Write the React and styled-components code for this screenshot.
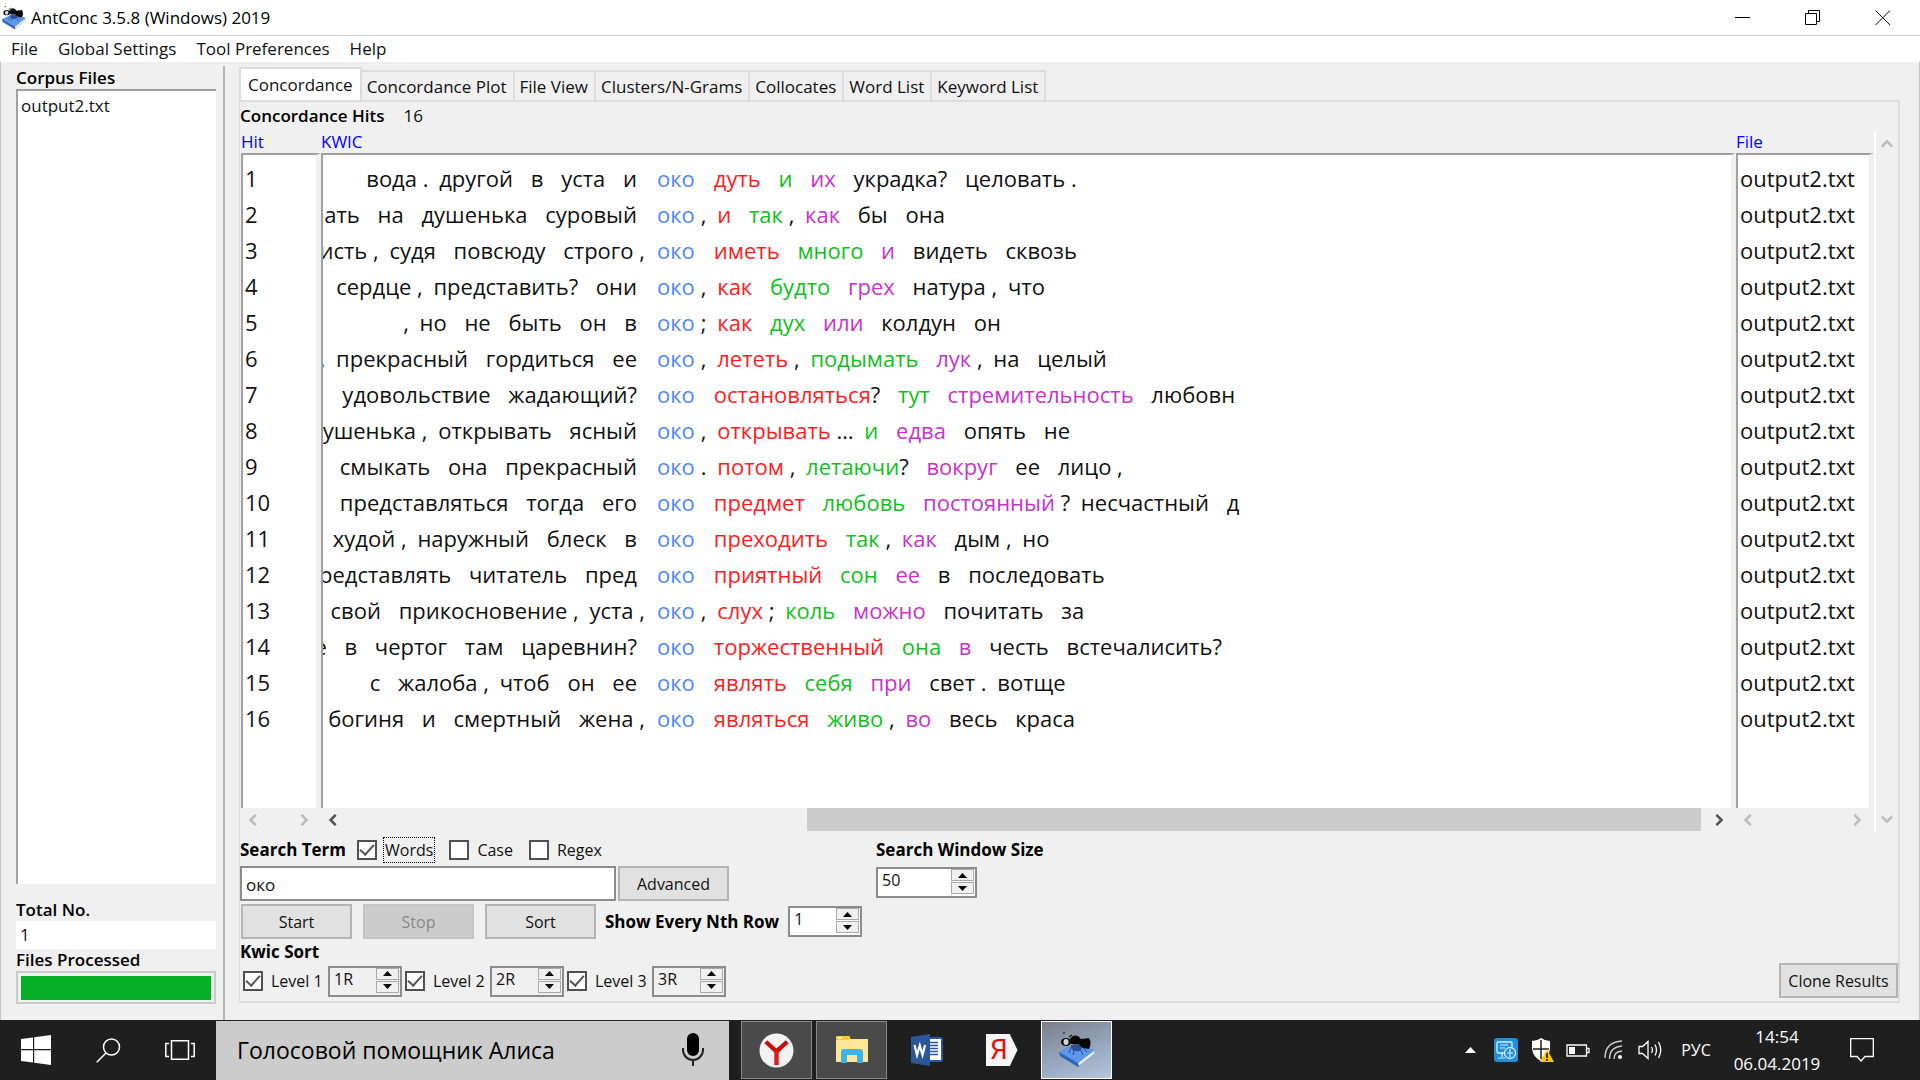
import React, { useState } from "react";
import styled, { createGlobalStyle, css } from "styled-components";

const FACE = "#f0f0f0";
const EDGE = "#dcdcdc";
const SUNKEN = "#a0a0a0";

const GlobalStyle = createGlobalStyle`
  * { box-sizing: border-box; }
  html, body { margin: 0; height: 100%; }
  body {
    background: ${FACE};
    color: #111;
    font: 17px/24px "Open Sans", "Noto Sans", sans-serif;
    overflow: hidden;
  }
  button, input { font: inherit; color: inherit; margin: 0; }
  button { padding: 0; border: 0; background: none; }
`;

const Screen = styled.div`
  display: flex;
  flex-direction: column;
  height: 100vh;
`;

/* ---------- window frame ---------- */

const TitleBar = styled.header`
  display: flex;
  align-items: center;
  flex: none;
  height: 36px;
  padding: 0 2px;
  background: #fff;
  border-bottom: 1px solid #ccc;
  color: #000;
`;

const WindowTitle = styled.h1`
  flex: 1;
  margin: 0;
  padding-left: 5px;
  font-size: 17px;
  font-weight: 400;
`;

const WindowButton = styled.button`
  display: grid;
  place-items: center;
  width: 70px;
  height: 34px;
`;

const MenuBar = styled.nav`
  display: flex;
  flex: none;
  gap: 20px;
  height: 26px;
  padding: 0 11px;
  background: #fff;
`;

const MenuItem = styled.button`
  height: 26px;
  font-size: 17px;
  line-height: 26px;
`;

const Workspace = styled.main`
  display: flex;
  flex: 1;
  min-height: 0;
  border: solid #c4c4c4;
  border-width: 0 1px;
`;

/* ---------- corpus sidebar ---------- */

const Sidebar = styled.aside`
  display: flex;
  flex-direction: column;
  width: 224px;
  margin-top: 4px;
  padding: 1px 7px 16px 15px;
  border-right: 2px solid #b4b4b4;
`;

const Caption = styled.span`
  font-size: 17px;
  font-weight: ${(p) => (p.$strong ? 700 : 600)};
  line-height: ${(p) => p.$line || 22}px;
  color: #000;
  white-space: nowrap;
`;

const FileList = styled.ul`
  flex: 1;
  margin: 0 0 15px;
  padding: 1px 3px;
  list-style: none;
  background: #fff;
  border: solid ${SUNKEN};
  border-width: 2px 0 0 2px;
  line-height: 28px;
`;

const CountBox = styled.output`
  padding: 0 4px;
  line-height: 28px;
  background: #fff;
`;

const ProgressFrame = styled.div`
  height: 33px;
  padding: 3px;
  border: 2px solid #cacaca;
`;

const ProgressFill = styled.div`
  width: 100%;
  height: 24px;
  background: #06b025;
`;

/* ---------- notebook ---------- */

const Notebook = styled.section`
  display: flex;
  flex: 1;
  flex-direction: column;
  min-width: 0;
  padding: 5px 19px 17px 14px;
`;

const TabStrip = styled.div`
  display: flex;
  align-items: flex-end;
  height: 33px;
`;

const Tab = styled.button`
  height: 30px;
  padding: 1px 6px 0 5px;
  border: solid ${EDGE};
  border-width: 2px 2px 0 0;
  font-size: 17px;
  line-height: 27px;
  white-space: nowrap;
  ${(p) =>
    p["aria-selected"] &&
    css`
      align-self: stretch;
      height: auto;
      padding: 0 7px;
      border-width: 2px;
      border-bottom: 0;
      background: #fff;
    `}
`;

const Pane = styled.div`
  display: flex;
  flex: 1;
  flex-direction: column;
  min-height: 0;
  border: 2px solid ${EDGE};
  border-left-width: 1px;
`;

const HitsLine = styled.div`
  display: flex;
  gap: 19px;
  line-height: 28px;
  height: 29px;
`;

const Results = styled.div`
  display: flex;
  flex: 1;
  min-height: 0;
  padding-left: 1px;
`;

const ResultTable = styled.table`
  flex: 1;
  width: 100%;
  height: 100%;
  table-layout: fixed;
  border-spacing: 0;
`;

const Col = styled.col`
  width: ${(p) => p.$width};
`;

const Head = styled.th`
  height: 22px;
  padding: 0;
  color: #0000ff;
  font-size: 17px;
  font-weight: 400;
  line-height: 22px;
  text-align: left;
`;

const Cell = styled.td`
  height: 36px;
  padding: 0 0 0 2px;
  overflow: hidden;
  background: #fff;
  border: solid ${SUNKEN};
  border-width: 0 5px 0 2px;
  border-right-color: ${FACE};
  font-size: 22px;
  line-height: 36px;
  white-space: nowrap;
`;

const KwicCell = styled(Cell)`
  padding: 0;
`;

const Row = styled.tr``;

const Body = styled.tbody`
  ${Row}:first-child ${Cell} {
    height: 7px;
    border-top: 2px solid ${SUNKEN};
    line-height: 0;
  }
  ${Row}:last-child ${Cell} { height: auto; }
`;

const BarCell = styled.td`
  height: 26px;
  padding: 0 5px 0 0;
  vertical-align: top;
`;

const HScroll = styled.div`
  display: flex;
  align-items: center;
  height: 23px;
  padding: 0 5px 0 6px;
  color: ${(p) => (p.$active ? "#555" : "#bdbdbd")};
`;

const Track = styled.div`
  display: flex;
  flex: 1;
  justify-content: flex-end;
  height: 23px;
  padding: 0 11px 0 0;
`;

const Thumb = styled.div`
  width: 65.7%;
  background: #cdcdcd;
`;

const ArrowButton = styled.button`
  display: grid;
  place-items: center;
  width: 14px;
  height: 20px;
`;

const VScroll = styled.div`
  display: flex;
  flex-direction: column;
  align-items: center;
  justify-content: space-between;
  width: 24px;
  margin-bottom: 2px;
  padding: 3px 0;
  border-left: 2px solid #fff;
  color: #bdbdbd;
`;

const KwicLine = styled.div`
  display: grid;
  grid-template-columns: 314px auto 1fr;
  column-gap: 20px;
  line-height: 36px;
`;

const LeftContext = styled.span`
  display: flex;
  justify-content: flex-end;
  overflow: hidden;
  white-space: pre;
  margin-right: ${(p) => (p.$punct ? "-8px" : "0")};
`;

const RightContext = styled.span`
  white-space: pre;
  margin-left: ${(p) => (p.$punct ? "-14px" : "-1px")};
`;

const Node = styled.span`
  color: #4f86ff;
`;

const Token = styled.span`
  margin-left: ${(p) => p.$gap}px;
`;

const Tint = styled.span`
  color: ${(p) => p.$color || "inherit"};
`;

/* ---------- search controls ---------- */

const Controls = styled.form`
  display: flex;
  flex: none;
  padding-bottom: 3px;
`;

const SearchColumn = styled.div`
  display: flex;
  flex-direction: column;
  width: 636px;
  padding-bottom: 1px;
`;

const ControlRow = styled.div`
  display: flex;
  align-items: center;
  height: ${(p) => p.$height}px;
  gap: ${(p) => p.$gap || 0}px;
`;

const Options = styled.div`
  display: flex;
  gap: 14px;
`;

const ButtonRow = styled.div`
  display: flex;
  align-items: center;
  gap: 9px;
  margin: 3px 0 0 1px;
`;

const ButtonGroup = styled.div`
  display: flex;
  gap: 11px;
`;

const LevelRow = styled.div`
  display: flex;
  align-items: center;
  height: 32px;
  padding-left: 3px;
  gap: 3px;
`;

const Level = styled.div`
  display: flex;
  align-items: center;
  justify-content: space-between;
  width: 159px;
`;

const Check = styled.label`
  display: flex;
  align-items: center;
  gap: 6px;
  font-size: 16px;
  white-space: nowrap;
`;

const CheckInput = styled.input`
  appearance: none;
  display: grid;
  place-items: center;
  width: 20px;
  height: 20px;
  border: 2px solid #505050;
  background: #fff;
  &:checked::after {
    content: "";
    width: 12px;
    height: 6px;
    margin-bottom: 4px;
    border: solid #555;
    border-width: 0 0 2px 2px;
    transform: rotate(-48deg);
  }
`;

const CheckText = styled.span`
  padding: 0 1px;
  border: 1px dotted ${(p) => (p.$focus ? "#000" : "transparent")};
`;

const SearchInput = styled.input`
  width: 376px;
  height: 35px;
  padding: 2px 4px 0;
  border: 2px solid #8c8c8c;
  background: #fff;
  outline: none;
`;

const PushButton = styled.button`
  width: ${(p) => p.$width || 111}px;
  height: 35px;
  border: 2px solid #b4b4b4;
  background: #e1e1e1;
  font-size: 16px;
  white-space: nowrap;
  &:disabled {
    border-color: #c4c4c4;
    background: #ccc;
    color: #888;
  }
`;

const SpinBox = styled.span`
  display: flex;
  width: ${(p) => p.$width}px;
  height: 31px;
  padding: 0 1px 2px 4px;
  border: 2px solid #8c8c8c;
  background: ${(p) => (p.$face ? FACE : "#fff")};
`;

const SpinInput = styled.input`
  flex: 1;
  min-width: 0;
  height: 22px;
  padding: 0;
  border: 0;
  outline: 0;
  background: transparent;
  font-size: 16px;
  line-height: 22px;
`;

const SpinArrows = styled.span`
  display: grid;
  grid-template-rows: 1fr 1fr;
  row-gap: 1px;
  width: 23px;
`;

const SpinButton = styled.button`
  display: grid;
  place-items: center;
  border: 1px solid #aaa;
  background: ${FACE};
`;

const WindowColumn = styled.div`
  display: flex;
  flex: 1;
  flex-direction: column;
  align-items: flex-start;
  gap: 2px;
`;

const Actions = styled.div`
  display: flex;
  align-items: flex-end;
`;

/* ---------- taskbar ---------- */

const TaskBar = styled.footer`
  display: flex;
  flex: none;
  height: 60px;
  background: #1f1f1f;
  color: #fff;
`;

const SystemButton = styled.button`
  display: grid;
  place-items: center;
  width: 72px;
  height: 60px;
`;

const Assistant = styled.label`
  display: flex;
  align-items: center;
  width: 513px;
  margin: 1px 12px 0 0;
  padding: 0 25px 2px 21px;
  background: #ccc;
  color: #000;
`;

const AssistantInput = styled.input`
  flex: 1;
  min-width: 0;
  padding: 0;
  border: 0;
  outline: 0;
  background: transparent;
  font-size: 23px;
  &::placeholder { color: #000; opacity: 1; }
`;

const Apps = styled.div`
  display: flex;
  gap: 4px;
  padding-top: 1px;
`;

const AppButton = styled.button`
  display: grid;
  place-items: center;
  width: 71px;
  height: 58px;
  border: 1px solid transparent;
  ${(p) => p.$open && css`
    border-color: #8a8a8a;
    background: #4a4a4a;
  `}
  ${(p) => p.$current && css`
    border-color: #fff;
    background: linear-gradient(160deg, #7b7f88 0%, #94a3bb 50%, #b3c5dc 100%);
  `}
`;

const Tray = styled.div`
  display: flex;
  align-items: center;
  margin-left: auto;
  padding-right: 40px;
`;

const TrayButton = styled.button`
  display: grid;
  place-items: center;
  width: 36px;
  height: 60px;
`;

const Language = styled.button`
  width: 44px;
  margin-left: 6px;
  font-size: 16px;
`;

const Clock = styled.time`
  width: 118px;
  margin-right: 8px;
  font-size: 17px;
  line-height: 27px;
  text-align: center;
`;

/* ---------- drawings ---------- */

const AntIcon = ({ size }) => (
  <svg width={size} height={size} viewBox="0 0 36 36" aria-hidden="true">
    <path d="M0 20 17 12 35 18 35 22 19 35 1 24Z" fill="#2f63b8" />
    <path d="M0 20 17 12 35 18 19 31Z" fill="#5f98ea" />
    <path d="M19 31 35 18.500 35 22 20 34Z" fill="#e6ebf2" />
    <path d="M13 14 10 21M16 14 14 23M20 14 24 23M23 14 28 20" stroke="#26468a" strokeWidth="1" fill="none" />
    <path d="M12 13Q17 11 24 14L21 19 14 19Z" fill="#2c4f96" />
    <ellipse cx="7" cy="10" rx="5" ry="4" fill="#0b0b0b" />
    <path d="M11 7Q14 2 19 4L22 7 30 6Q33 11 30 17L24 16 19 12 12 12Z" fill="#080808" />
    <ellipse cx="7" cy="10" rx="2.500" ry="3" fill="#d8d8d8" />
    <path d="M4 1H6M10 5 13 3" stroke="#111" strokeWidth="1.200" fill="none" />
  </svg>
);

const ARROWS = {
  left: "M9 1 3 7 9 13",
  right: "M4 1 10 7 4 13",
  up: "M1 10 7 4 13 10",
  down: "M1 4 7 10 13 4",
};

const Arrow = ({ dir }) => (
  <svg width="12" height="12" viewBox="0 0 14 14" aria-hidden="true">
    <path d={ARROWS[dir]} fill="none" stroke="currentColor" strokeWidth="3" />
  </svg>
);

const Triangle = ({ up }) => (
  <svg width="9" height="5" viewBox="0 0 9 5" aria-hidden="true">
    <path d={up ? "M0 5 4.500 0 9 5Z" : "M0 0 4.500 5 9 0Z"} />
  </svg>
);

const MinimizeIcon = () => (
  <svg width="16" height="16" viewBox="0 0 16 16"><path d="M0 7.500H15" stroke="#000" /></svg>
);

const RestoreIcon = () => (
  <svg width="16" height="16" viewBox="0 0 16 16" fill="none" stroke="#000">
    <path d="M.5 3.500H11.500V14.500H.5ZM3.500 3V.5H14.500V11.500H12" />
  </svg>
);

const CloseIcon = () => (
  <svg width="16" height="16" viewBox="0 0 16 16"><path d="M.5.5 15 15M15 .5.5 15" stroke="#000" /></svg>
);

const WindowsIcon = () => (
  <svg width="30" height="30" viewBox="0 0 30 30" fill="#fff">
    <path d="M0 4 12 2.500V14H0ZM13.200 2.300 30 0V14H13.200ZM0 15.200H12V27.500L0 26ZM13.200 15.200H30V30L13.200 27.700Z" />
  </svg>
);

const SearchIcon = () => (
  <svg width="25" height="25" viewBox="0 0 25 25" fill="none" stroke="#fff" strokeWidth="1.500">
    <circle cx="15.500" cy="9" r="8" />
    <path d="M10 15 .7 24.300" />
  </svg>
);

const TaskViewIcon = () => (
  <svg width="30" height="20" viewBox="0 0 30 20" fill="none" stroke="#fff" strokeWidth="1.500">
    <path d="M6.500.8H23.500V19.200H6.500ZM4 3.500H.8V16.500H4M26 3.500H29.200V16.500H26" />
  </svg>
);

const MicIcon = () => (
  <svg width="22" height="34" viewBox="0 0 22 34">
    <rect x="5" y="0" width="12" height="23" rx="6" />
    <path d="M1 15v2a10 10 0 0 0 20 0v-2M11 27v6" fill="none" stroke="#222" strokeWidth="2" />
  </svg>
);

const YandexBrowserIcon = () => (
  <svg width="35" height="35" viewBox="0 0 36 36">
    <circle cx="18" cy="18" r="17.500" fill="#f2f2f2" />
    <path d="M7 9 18 19 29 9" fill="none" stroke="#c40f0f" strokeWidth="4.500" />
    <path d="M18 18V33" fill="none" stroke="#e01b1b" strokeWidth="4.500" />
  </svg>
);

const ExplorerIcon = () => (
  <svg width="34" height="30" viewBox="0 0 34 30">
    <path d="M1 2H14L16 4H33V27H1Z" fill="#ffe694" />
    <path d="M1 2Q1 1 2 1H14Q15.500 1 15 3L14 5H1Z" fill="#ffc928" />
    <path d="M3 3H7" stroke="#fff" strokeWidth="1.500" />
    <path d="M6 28V17Q6 14 9 14H25Q28 14 28 17V28H22V20H12V28Z" fill="#3db4e7" />
  </svg>
);

const WordIcon = () => (
  <svg width="34" height="34" viewBox="0 0 34 34">
    <path d="M16 4H31Q33 4 33 6V27Q33 29 31 29H16Z" fill="#2b579a" />
    <path d="M18 6H31V27H18Z" fill="#fff" />
    <path d="M19 9.500H28M19 12.500H28M19 15.500H28M19 18.500H28M19 21.500H28" stroke="#2b579a" strokeWidth="1.300" />
    <path d="M1 4 20 1V33L1 30Z" fill="#2b579a" />
    <path d="M4.500 12 7 22 9.800 12.500 12.500 22 15 12" fill="none" stroke="#fff" strokeWidth="2.200" />
  </svg>
);

const YandexShape = styled.span`
  display: grid;
  place-items: center;
  width: 32px;
  height: 32px;
  padding-right: 5px;
  background: #f7f7f7;
  clip-path: polygon(0 0, 76% 0, 100% 50%, 76% 100%, 0 100%);
  color: #e01010;
  font: 28px/32px Roboto, sans-serif;
`;

const CaretIcon = () => (
  <svg width="11" height="6" viewBox="0 0 11 6"><path d="M0 6 5.500 0 11 6Z" fill="#fff" /></svg>
);

const GraphicsIcon = () => (
  <svg width="24" height="24" viewBox="0 0 24 24">
    <rect width="24" height="24" rx="3" fill="#1f8fd8" />
    <rect x="3" y="4" width="15" height="11" rx="1" fill="none" stroke="#d8f0ff" strokeWidth="1.300" />
    <circle cx="16" cy="15" r="5.500" fill="#1f8fd8" stroke="#d8f0ff" strokeWidth="1.300" />
    <path d="M6 7H14M6 10H11M8 15V19M4 20H11M13 15H19M16 11V19" stroke="#d8f0ff" strokeWidth="1.200" />
  </svg>
);

const ShieldIcon = () => (
  <svg width="24" height="26" viewBox="0 0 24 26">
    <path d="M11 1Q15 4 20 4V12Q19 20 11 24 3 20 2 12V4Q7 4 11 1Z" fill="#fff" />
    <path d="M11 3V22M3 12H19" stroke="#1f1f1f" strokeWidth="1.500" />
    <path d="M17 12 24 25H10Z" fill="#ffc20e" />
    <path d="M17 16V21M17 22V24" stroke="#111" strokeWidth="1.500" />
  </svg>
);

const BatteryIcon = () => (
  <svg width="24" height="13" viewBox="0 0 24 13">
    <path d="M1 1H20.500V12H1ZM21 4.500H23V8.500H21" fill="none" stroke="#fff" strokeWidth="1.300" />
    <path d="M3 3H9V10H3Z" fill="#fff" />
  </svg>
);

const WifiIcon = () => (
  <svg width="22" height="22" viewBox="0 0 22 22" fill="none" strokeWidth="1.400">
    <path d="M2 19Q2 3 19 2M6.500 20Q6.500 8 19 7M11 20Q11 12.500 19 12" stroke="#ccc" />
    <circle cx="17" cy="18" r="2" fill="#fff" />
  </svg>
);

const SpeakerIcon = () => (
  <svg width="25" height="20" viewBox="0 0 25 20" fill="none" stroke="#fff" strokeWidth="1.300">
    <path d="M1 6.500H4.500L10 1.500V18.500L4.500 13.500H1ZM13.500 7Q15.500 10 13.500 13M17 4.500Q20 10 17 15.500M20.500 2Q25 10 20.500 18" />
  </svg>
);

const ActionCenterIcon = () => (
  <svg width="24" height="25" viewBox="0 0 24 25" fill="none" stroke="#fff" strokeWidth="1.300">
    <path d="M.7.7H23.300V18.500H15L11 23 7 18.500H.7Z" />
  </svg>
);

/* ---------- data ---------- */

const MENUS = ["File", "Global Settings", "Tool Preferences", "Help"];

const TABS = [
  "Concordance",
  "Concordance Plot",
  "File View",
  "Clusters/N-Grams",
  "Collocates",
  "Word List",
  "Keyword List",
];

const HITS = [
  ["вода . другой в уста и", "дуть и их украдка? целовать ."],
  ["брать на душенька суровый", ", и так , как бы она"],
  ["висть , судя повсюду строго ,", "иметь много и видеть сквозь"],
  ["сердце , представить? они", ", как будто грех натура , что"],
  [", но не быть он в", "; как дух или колдун он"],
  [", прекрасный гордиться ее", ", лететь , подымать лук , на целый"],
  ["удовольствие жадающий?", "остановляться? тут стремительность любовн"],
  ["душенька , открывать ясный", ", открывать … и едва опять не"],
  ["смыкать она прекрасный", ". потом , летаючи? вокруг ее лицо ,"],
  ["представляться тогда его", "предмет любовь постоянный ? несчастный д"],
  ["худой , наружный блеск в", "преходить так , как дым , но"],
  ["представлять читатель пред", "приятный сон ее в последовать"],
  ["свой прикосновение , уста ,", ", слух ; коль можно почитать за"],
  ["е в чертог там царевнин?", "торжественный она в честь встечалисить?"],
  ["с жалоба , чтоб он ее", "являть себя при свет . вотще"],
  ["богиня и смертный жена ,", "являться живо , во весь краса"],
];

const SORT_COLORS = ["#ff1c1c", "#10c01c", "#c932c9"];

const isPunct = (token) => /^[.,;?…]$/.test(token);

function Context({ text, colors = [] }) {
  let wordIndex = 0;
  return text.split(" ").map((token, i, all) => {
    const punct = isPunct(token);
    const gap = i === 0 || punct ? 0 : isPunct(all[i - 1]) ? 5 : 12;
    const color = punct ? undefined : colors[wordIndex++];
    const word = token.replace(/(.)\?$/, "$1");
    return (
      <React.Fragment key={i}>
        {i > 0 && " "}
        <Token $gap={gap}>
          <Tint $color={color}>{word}</Tint>
          {word !== token && "?"}
        </Token>
      </React.Fragment>
    );
  });
}

function ScrollBar({ active, label }) {
  return (
    <HScroll $active={active}>
      <ArrowButton type="button" aria-label={`${label}: scroll left`}><Arrow dir="left" /></ArrowButton>
      <Track>{active && <Thumb />}</Track>
      <ArrowButton type="button" aria-label={`${label}: scroll right`}><Arrow dir="right" /></ArrowButton>
    </HScroll>
  );
}

function Spinner({ id, label, initial, width = 74, face }) {
  const [value, setValue] = useState(initial);
  const step = (d) =>
    setValue((v) => String(v).replace(/\d+/, (n) => Math.max(0, Number(n) + d)));
  return (
    <SpinBox $width={width} $face={face}>
      <SpinInput id={id} aria-label={label} value={value} onChange={(e) => setValue(e.target.value)} />
      <SpinArrows>
        <SpinButton type="button" aria-label="Increase" onClick={() => step(1)}><Triangle up /></SpinButton>
        <SpinButton type="button" aria-label="Decrease" onClick={() => step(-1)}><Triangle /></SpinButton>
      </SpinArrows>
    </SpinBox>
  );
}

function CheckBox({ label, checked, focus }) {
  return (
    <Check>
      <CheckInput type="checkbox" defaultChecked={checked} />
      <CheckText $focus={focus}>{label}</CheckText>
    </Check>
  );
}

function Concordance() {
  return (
    <Results>
      <ResultTable>
        <colgroup>
          <Col $width="80px" />
          <Col $width="auto" />
          <Col $width="138px" />
        </colgroup>
        <thead>
          <tr><Head>Hit</Head><Head>KWIC</Head><Head>File</Head></tr>
        </thead>
        <Body>
          <Row><Cell /><Cell /><Cell /></Row>
          {HITS.map(([left, right], i) => (
            <Row key={i}>
              <Cell>{i + 1}</Cell>
              <KwicCell>
                <KwicLine>
                  <LeftContext $punct={left.endsWith(" ,")}>
                    <span><Context text={left} /></span>
                  </LeftContext>
                  <Node>око</Node>
                  <RightContext $punct={isPunct(right[0])}>
                    <Context text={right} colors={SORT_COLORS} />
                  </RightContext>
                </KwicLine>
              </KwicCell>
              <Cell>output2.txt</Cell>
            </Row>
          ))}
          <Row><Cell /><Cell /><Cell /></Row>
        </Body>
        <tfoot>
          <tr>
            <BarCell><ScrollBar label="Hit" /></BarCell>
            <BarCell><ScrollBar label="KWIC" active /></BarCell>
            <BarCell><ScrollBar label="File" /></BarCell>
          </tr>
        </tfoot>
      </ResultTable>
      <VScroll>
        <ArrowButton type="button" aria-label="Scroll up"><Arrow dir="up" /></ArrowButton>
        <ArrowButton type="button" aria-label="Scroll down"><Arrow dir="down" /></ArrowButton>
      </VScroll>
    </Results>
  );
}

function SearchControls() {
  return (
    <Controls onSubmit={(e) => e.preventDefault()}>
      <SearchColumn>
        <ControlRow $height={32} $gap={11}>
          <Caption as="label" $strong htmlFor="term">Search Term</Caption>
          <Options>
            <CheckBox label="Words" checked focus />
            <CheckBox label="Case" />
            <CheckBox label="Regex" />
          </Options>
        </ControlRow>
        <ControlRow $height={35} $gap={2}>
          <SearchInput id="term" defaultValue="око" />
          <PushButton type="button">Advanced</PushButton>
        </ControlRow>
        <ButtonRow>
          <ButtonGroup>
            <PushButton type="submit">Start</PushButton>
            <PushButton type="button" disabled>Stop</PushButton>
            <PushButton type="button">Sort</PushButton>
          </ButtonGroup>
          <Caption as="label" $strong htmlFor="nth">Show Every Nth Row</Caption>
          <Spinner id="nth" initial="1" />
        </ButtonRow>
        <ControlRow $height={26}><Caption $strong>Kwic Sort</Caption></ControlRow>
        <LevelRow>
          {[1, 2, 3].map((n) => (
            <Level key={n}>
              <CheckBox label={`Level ${n}`} checked />
              <Spinner label={`Level ${n} position`} initial={`${n}R`} face />
            </Level>
          ))}
        </LevelRow>
      </SearchColumn>
      <WindowColumn>
        <ControlRow $height={31}>
          <Caption as="label" $strong htmlFor="size">Search Window Size</Caption>
        </ControlRow>
        <Spinner id="size" initial="50" width={101} />
      </WindowColumn>
      <Actions>
        <PushButton type="button" $width={119}>Clone Results</PushButton>
      </Actions>
    </Controls>
  );
}

export default function App() {
  return (
    <Screen>
      <GlobalStyle />
      <TitleBar>
        <AntIcon size={24} />
        <WindowTitle>AntConc 3.5.8 (Windows) 2019</WindowTitle>
        <WindowButton aria-label="Minimize"><MinimizeIcon /></WindowButton>
        <WindowButton aria-label="Restore"><RestoreIcon /></WindowButton>
        <WindowButton aria-label="Close"><CloseIcon /></WindowButton>
      </TitleBar>
      <MenuBar>
        {MENUS.map((name) => <MenuItem key={name}>{name}</MenuItem>)}
      </MenuBar>
      <Workspace>
        <Sidebar>
          <Caption>Corpus Files</Caption>
          <FileList><li>output2.txt</li></FileList>
          <Caption>Total No.</Caption>
          <CountBox>1</CountBox>
          <Caption>Files Processed</Caption>
          <ProgressFrame><ProgressFill /></ProgressFrame>
        </Sidebar>
        <Notebook>
          <TabStrip role="tablist">
            {TABS.map((name, i) => (
              <Tab key={name} role="tab" aria-selected={i === 0}>{name}</Tab>
            ))}
          </TabStrip>
          <Pane role="tabpanel">
            <HitsLine><Caption $line={28}>Concordance Hits</Caption><span>16</span></HitsLine>
            <Concordance />
            <SearchControls />
          </Pane>
        </Notebook>
      </Workspace>
      <TaskBar>
        <SystemButton aria-label="Start"><WindowsIcon /></SystemButton>
        <SystemButton aria-label="Search"><SearchIcon /></SystemButton>
        <SystemButton aria-label="Task view"><TaskViewIcon /></SystemButton>
        <Assistant>
          <AssistantInput aria-label="Голосовой помощник Алиса" placeholder="Голосовой помощник Алиса" />
          <MicIcon />
        </Assistant>
        <Apps>
          <AppButton $open aria-label="Yandex Browser"><YandexBrowserIcon /></AppButton>
          <AppButton $open aria-label="Explorer"><ExplorerIcon /></AppButton>
          <AppButton aria-label="Word"><WordIcon /></AppButton>
          <AppButton><YandexShape>Я</YandexShape></AppButton>
          <AppButton $current aria-label="AntConc"><AntIcon size={36} /></AppButton>
        </Apps>
        <Tray>
          <TrayButton aria-label="Hidden icons"><CaretIcon /></TrayButton>
          <TrayButton aria-label="Graphics"><GraphicsIcon /></TrayButton>
          <TrayButton aria-label="Security"><ShieldIcon /></TrayButton>
          <TrayButton aria-label="Battery"><BatteryIcon /></TrayButton>
          <TrayButton aria-label="Network"><WifiIcon /></TrayButton>
          <TrayButton aria-label="Volume"><SpeakerIcon /></TrayButton>
          <Language>РУС</Language>
          <Clock>14:54<br />06.04.2019</Clock>
          <TrayButton aria-label="Notifications"><ActionCenterIcon /></TrayButton>
        </Tray>
      </TaskBar>
    </Screen>
  );
}
